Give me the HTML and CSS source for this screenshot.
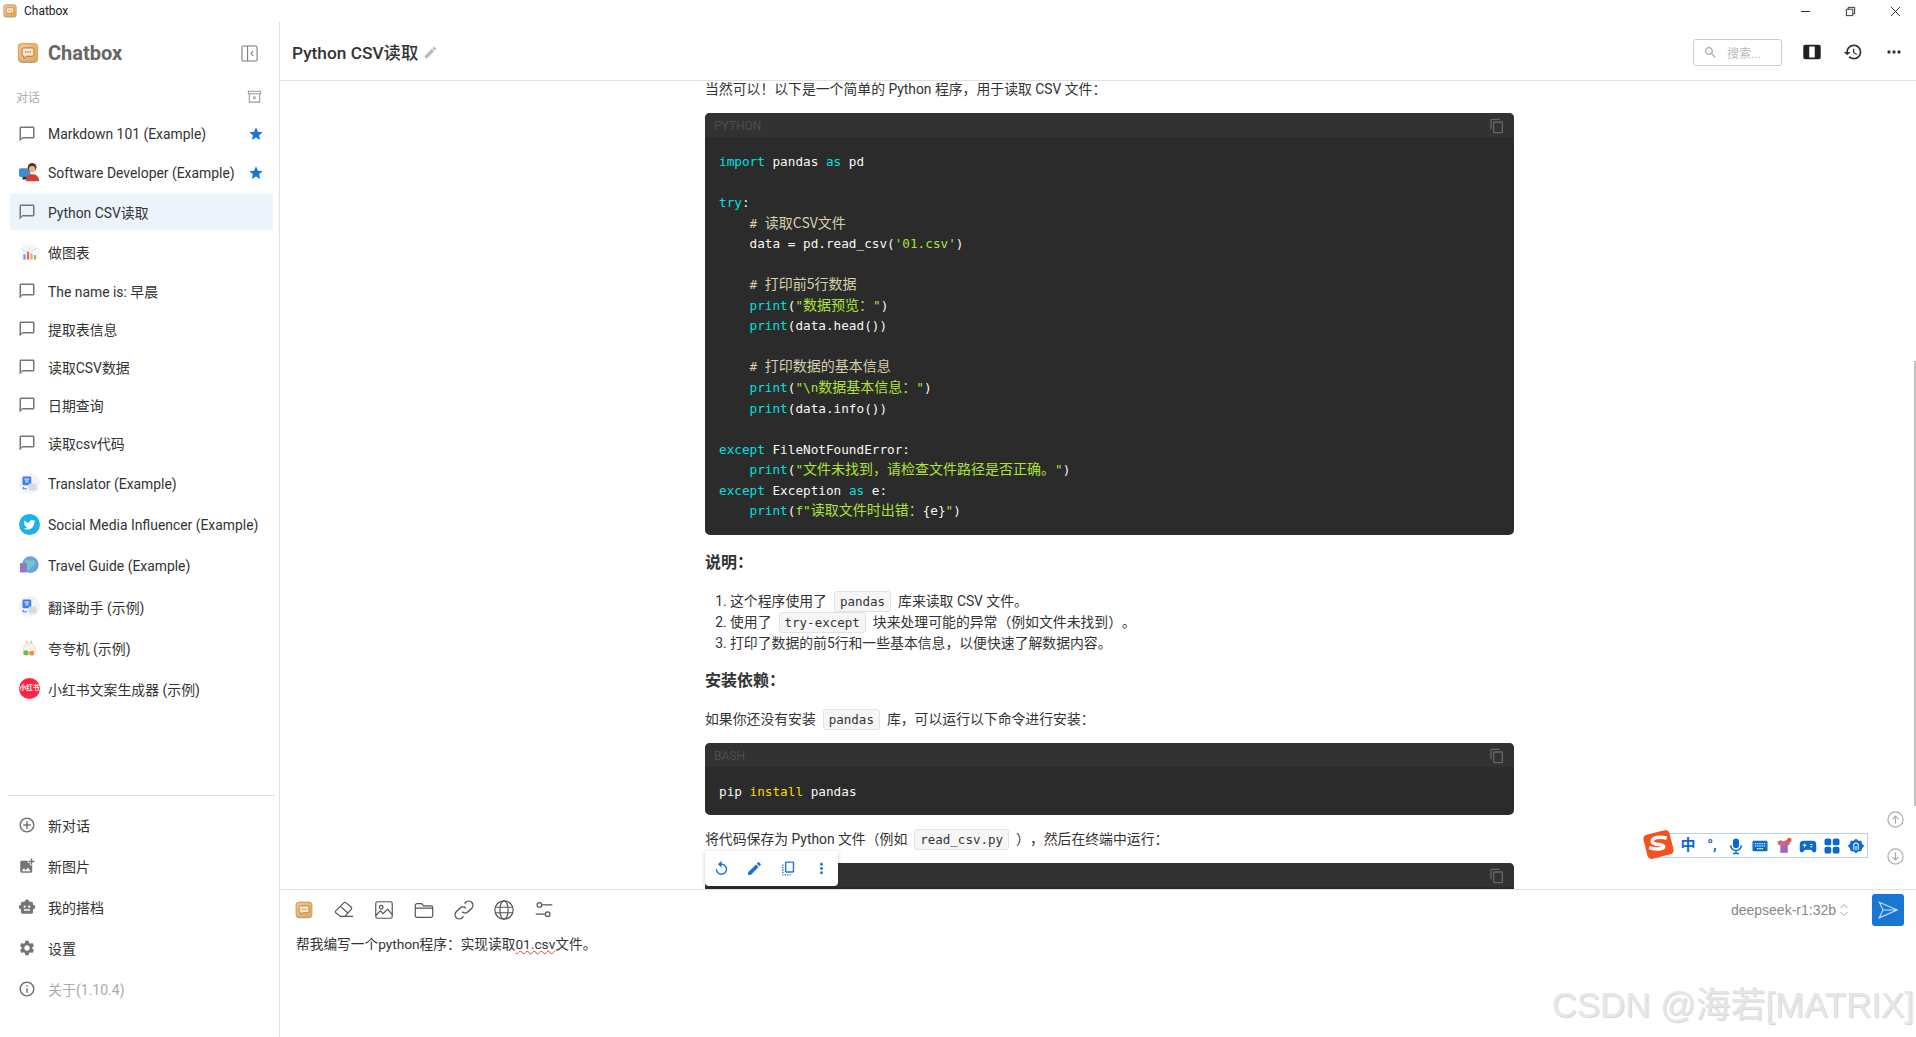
FILE: index.html
```html
<!DOCTYPE html>
<html lang="zh">
<head>
    <meta charset="UTF-8">
    <title>Chatbox</title>
    <link rel="stylesheet" href="styles.css">
</head>
<body>
    <svg class="sprite" aria-hidden="true">
        <defs>
            <linearGradient id="logoGrad" x1="0" y1="0" x2="1" y2="1">
                <stop offset="0" stop-color="#f5c98a"/>
                <stop offset="1" stop-color="#f0a04e"/>
            </linearGradient>
        </defs>
        <symbol id="i-logo" viewBox="0 0 24 24">
            <rect x="1" y="1" width="22" height="22" rx="5" fill="#6fb38f"/>
            <rect x="1" y="1" width="22" height="21" rx="5" fill="#e0a468"/>
            <rect x="2.500" y="2.500" width="19" height="18" rx="4" fill="url(#logoGrad)"/>
            <path d="M7.500 6.500h9a2 2 0 0 1 2 2v5a2 2 0 0 1-2 2h-6l-3 2.500v-2.500a2 2 0 0 1-2-2v-5a2 2 0 0 1 2-2z" fill="#fbe6cb" stroke="#8a6a4a" stroke-width=".9"/>
            <circle cx="9.500" cy="11" r=".8" fill="#8a6a4a"/><circle cx="12" cy="11" r=".8" fill="#8a6a4a"/><circle cx="14.500" cy="11" r=".8" fill="#8a6a4a"/>
        </symbol>
        <symbol id="i-chat" viewBox="0 0 24 24"><path d="M20 2H4c-1.100 0-2 .9-2 2v18l4-4h14c1.100 0 2-.9 2-2V4c0-1.100-.9-2-2-2zm0 14H6l-2 2V4h16v12z"/></symbol>
        <symbol id="i-star" viewBox="0 0 24 24"><path d="M12 17.270 18.180 21l-1.640-6.970L22 9.240l-7.190-.61L12 2 9.190 8.630 2 9.240l5.460 4.730L5.820 21z"/></symbol>
        <symbol id="i-add" viewBox="0 0 24 24"><path d="M13 7h-2v4H7v2h4v4h2v-4h4v-2h-4V7zm-1-5C6.480 2 2 6.480 2 12s4.480 10 10 10 10-4.480 10-10S17.520 2 12 2zm0 18c-4.410 0-8-3.590-8-8s3.590-8 8-8 8 3.590 8 8-3.590 8-8 8z"/></symbol>
        <symbol id="i-photo" viewBox="0 0 24 24"><path d="M19 7v2.990s-1.990.01-2 0V7h-3s.01-1.990 0-2h3V2h2v3h3v2h-3zm-3 4V8h-3V5H5c-1.100 0-2 .9-2 2v12c0 1.100.9 2 2 2h12c1.100 0 2-.9 2-2v-8h-3zM5 19l3-4 2 3 3-4 4 5H5z"/></symbol>
        <symbol id="i-bot" viewBox="0 0 24 24"><path d="M20 9V7c0-1.100-.9-2-2-2h-3c0-1.660-1.340-3-3-3S9 3.340 9 5H6c-1.100 0-2 .9-2 2v2c-1.660 0-3 1.340-3 3s1.340 3 3 3v4c0 1.100.9 2 2 2h12c1.100 0 2-.9 2-2v-4c1.660 0 3-1.340 3-3s-1.340-3-3-3zM7.500 11.500c0-.83.67-1.500 1.500-1.500s1.500.67 1.500 1.500S9.830 13 9 13s-1.500-.67-1.500-1.500zM16 17H8v-2h8v2zm-1-4c-.83 0-1.500-.67-1.500-1.500S14.170 10 15 10s1.500.67 1.500 1.500S15.830 13 15 13z"/></symbol>
        <symbol id="i-gear" viewBox="0 0 24 24"><path d="M19.140 12.940c.04-.3.06-.61.06-.94 0-.32-.02-.64-.07-.94l2.030-1.580c.18-.14.23-.41.12-.61l-1.920-3.320c-.12-.22-.37-.29-.59-.22l-2.390.96c-.5-.38-1.030-.7-1.620-.94l-.36-2.540c-.04-.24-.24-.41-.48-.41h-3.840c-.24 0-.43.17-.47.41l-.36 2.540c-.59.24-1.130.57-1.620.94l-2.390-.96c-.22-.08-.47 0-.59.22L2.740 8.870c-.12.21-.08.47.12.61l2.030 1.580c-.05.3-.09.63-.09.94s.02.64.07.94l-2.030 1.580c-.18.14-.23.41-.12.61l1.920 3.320c.12.22.37.29.59.22l2.390-.96c.5.38 1.030.7 1.620.94l.36 2.540c.05.24.24.41.48.41h3.840c.24 0 .44-.17.47-.41l.36-2.540c.59-.24 1.130-.56 1.620-.94l2.390.96c.22.08.47 0 .59-.22l1.920-3.320c.12-.22.07-.47-.12-.61l-2.010-1.580zM12 15.600c-1.980 0-3.600-1.620-3.600-3.600s1.620-3.600 3.600-3.600 3.600 1.620 3.600 3.600-1.620 3.600-3.600 3.600z"/></symbol>
        <symbol id="i-info" viewBox="0 0 24 24"><path d="M11 7h2v2h-2zm0 4h2v6h-2zm1-9C6.480 2 2 6.480 2 12s4.480 10 10 10 10-4.480 10-10S17.520 2 12 2zm0 18c-4.410 0-8-3.590-8-8s3.590-8 8-8 8 3.590 8 8-3.590 8-8 8z"/></symbol>
        <symbol id="i-edit" viewBox="0 0 24 24"><path d="M3 17.250V21h3.750L17.810 9.940l-3.750-3.750L3 17.250zM20.710 7.040c.39-.39.39-1.020 0-1.410l-2.340-2.340a.996.996 0 0 0-1.410 0l-1.830 1.830 3.750 3.750 1.830-1.830z"/></symbol>
        <symbol id="i-replay" viewBox="0 0 24 24"><path d="M12 5V1L7 6l5 5V7c3.310 0 6 2.690 6 6s-2.690 6-6 6-6-2.690-6-6H4c0 4.420 3.580 8 8 8s8-3.580 8-8-3.580-8-8-8z"/></symbol>
        <symbol id="i-copyall" viewBox="0 0 24 24"><path d="M18 2H9c-1.100 0-2 .9-2 2v12c0 1.100.9 2 2 2h9c1.100 0 2-.9 2-2V4c0-1.100-.9-2-2-2zm0 14H9V4h9v12zM3 15v-2h2v2H3zm0-5.500h2v2H3v-2zM10 20h2v2h-2v-2zm-7-1.500v-2h2v2H3zM5 22c-1.100 0-2-.9-2-2h2v2zm3.500 0h-2v-2h2v2zm5 0v-2h2c0 1.100-.9 2-2 2zM5 6v2H3c0-1.100.9-2 2-2z"/></symbol>
        <symbol id="i-vert" viewBox="0 0 24 24"><circle cx="12" cy="6" r="2"/><circle cx="12" cy="12" r="2"/><circle cx="12" cy="18" r="2"/></symbol>
        <symbol id="i-horiz" viewBox="0 0 24 24"><circle cx="6" cy="12" r="2"/><circle cx="12" cy="12" r="2"/><circle cx="18" cy="12" r="2"/></symbol>
        <symbol id="i-history" viewBox="0 0 24 24"><path d="M13 3c-4.970 0-9 4.030-9 9H1l3.890 3.890.07.14L9 12H6c0-3.870 3.130-7 7-7s7 3.130 7 7-3.130 7-7 7c-1.930 0-3.680-.79-4.940-2.060l-1.420 1.420C8.270 19.990 10.510 21 13 21c4.970 0 9-4.030 9-9s-4.030-9-9-9zm-1 5v5l4.280 2.540.72-1.210-3.500-2.080V8H12z"/></symbol>
        <symbol id="i-search" viewBox="0 0 24 24"><path d="M15.500 14h-.79l-.28-.27C15.410 12.590 16 11.110 16 9.500 16 5.910 13.090 3 9.500 3S3 5.910 3 9.500 5.910 16 9.500 16c1.610 0 3.090-.59 4.230-1.570l.27.28v.79l5 4.990L20.490 19l-4.990-5zm-6 0C7.010 14 5 11.990 5 9.500S7.010 5 9.500 5 14 7.010 14 9.500 11.990 14 9.500 14z"/></symbol>
        <symbol id="i-copy" viewBox="0 0 24 24"><path d="M16 1H4c-1.100 0-2 .9-2 2v14h2V3h12V1zm3 4H8c-1.100 0-2 .9-2 2v14c0 1.100.9 2 2 2h11c1.100 0 2-.9 2-2V7c0-1.100-.9-2-2-2zm0 16H8V7h11v14z"/></symbol>
        <symbol id="i-translate" viewBox="0 0 24 24">
            <circle cx="12" cy="12" r="12" fill="#f2f3f5"/>
            <rect x="4" y="4" width="10" height="10" rx="1.500" fill="#3f7fe8"/>
            <rect x="11" y="12" width="9" height="8" rx="1.500" fill="#d5dbe6"/>
            <path d="M6 7h6M9 6v1M7 11l4-3M7 8l4 3" stroke="#fff" stroke-width=".9" fill="none"/>
            <path d="M5 16v2h4" stroke="#3f7fe8" stroke-width="1.300" fill="none"/>
        </symbol>
        <symbol id="i-twitter" viewBox="0 0 24 24">
            <circle cx="12" cy="12" r="12" fill="#1fb1ea"/>
            <path transform="translate(4.200 4.200) scale(.65)" fill="#fff" d="M22.460 6c-.77.35-1.600.58-2.460.69.88-.53 1.560-1.370 1.880-2.380-.83.5-1.750.85-2.720 1.070C18.370 4.500 17.260 4 16 4c-2.350 0-4.270 1.920-4.270 4.290 0 .34.04.67.11.98C8.280 9.090 5.110 7.380 3 4.790c-.37.63-.58 1.370-.58 2.150 0 1.490.75 2.810 1.910 3.560-.71 0-1.370-.2-1.950-.5v.03c0 2.080 1.480 3.820 3.440 4.210a4.220 4.220 0 0 1-1.930.07 4.280 4.280 0 0 0 4 2.980 8.521 8.521 0 0 1-5.330 1.840c-.34 0-.68-.02-1.020-.06C3.440 20.290 5.700 21 8.120 21 16 21 20.310 14.460 20.310 8.790c0-.19 0-.37-.01-.56.84-.6 1.560-1.360 2.140-2.230z"/>
        </symbol>
    </svg>

    <div class="titlebar">
        <svg class="title-logo"><use href="#i-logo"/></svg>
        <span class="title-name">Chatbox</span>
        <div class="win-controls">
            <svg viewBox="0 0 12 12"><path d="M1 6h10" stroke="#222" fill="none"/></svg>
            <svg viewBox="0 0 12 12"><path d="M1.500 3.500h7v7h-7zM3.500 3.500v-2h7v7h-2" stroke="#222" fill="none"/></svg>
            <svg viewBox="0 0 12 12"><path d="M1 1l10 10M11 1L1 11" stroke="#222" fill="none"/></svg>
        </div>
    </div>

    <div class="app">
        <aside class="sidebar">
            <div class="brand">
                <svg class="brand-logo"><use href="#i-logo"/></svg>
                <span class="brand-name">Chatbox</span>
                <svg class="collapse" viewBox="0 0 18 18" fill="none" stroke="#777" stroke-width="1.100">
                    <rect x="1" y="1" width="16" height="16" rx="1.500"/>
                    <path d="M7 1v16M13 6.500L10.500 9l2.500 2.500"/>
                </svg>
            </div>
            <div class="section-label">
                <span>对话</span>
                <svg class="archive" viewBox="0 0 16 16" fill="none" stroke="#999" stroke-width="1.100">
                    <path d="M1.500 2.500h13v2.500h-13zM2.500 5v9h11V5M6.700 8l2.600 2.600M9.300 8l-2.600 2.600"/>
                </svg>
            </div>
            <nav class="chat-list">
                <a class="row"><svg class="row-icon"><use href="#i-chat"/></svg><span class="row-text">Markdown 101 (Example)</span><svg class="row-star"><use href="#i-star"/></svg></a>
                <a class="row row-mid">
                    <svg class="row-avatar" viewBox="0 0 24 24">
                        <rect x="0" y="7" width="13" height="10" rx="2" fill="#3f8fc4"/>
                        <rect x="4" y="17" width="5" height="3" fill="#333"/>
                        <circle cx="15" cy="6" r="5" fill="#5a3422"/>
                        <circle cx="15" cy="8" r="3.500" fill="#e9b48c"/>
                        <path d="M8 22c0-6 3-8 7-8s8 2 8 8z" fill="#d8402d"/>
                    </svg>
                    <span class="row-text">Software Developer (Example)</span><svg class="row-star"><use href="#i-star"/></svg>
                </a>
                <a class="row row-tall row-active"><svg class="row-icon"><use href="#i-chat"/></svg><span class="row-text">Python CSV读取</span></a>
                <a class="row row-tall">
                    <svg class="row-avatar" viewBox="0 0 24 24">
                        <circle cx="12" cy="12" r="11" fill="#f7f6f8"/>
                        <path d="M3 8l4 3 4-4 4 3 6-3" stroke="#b9b4c8" fill="none" stroke-dasharray="1 1"/>
                        <rect x="5" y="14" width="2.500" height="6" fill="#5aa5e6"/>
                        <rect x="9" y="11" width="2.500" height="9" fill="#e8607a"/>
                        <rect x="13" y="13" width="2.500" height="7" fill="#f0b040"/>
                        <rect x="17" y="15" width="2.500" height="5" fill="#7ac070"/>
                    </svg>
                    <span class="row-text">做图表</span>
                </a>
                <a class="row"><svg class="row-icon"><use href="#i-chat"/></svg><span class="row-text">The name is: 早晨</span></a>
                <a class="row"><svg class="row-icon"><use href="#i-chat"/></svg><span class="row-text">提取表信息</span></a>
                <a class="row"><svg class="row-icon"><use href="#i-chat"/></svg><span class="row-text">读取CSV数据</span></a>
                <a class="row"><svg class="row-icon"><use href="#i-chat"/></svg><span class="row-text">日期查询</span></a>
                <a class="row"><svg class="row-icon"><use href="#i-chat"/></svg><span class="row-text">读取csv代码</span></a>
                <a class="row row-persona row-first"><svg class="row-avatar"><use href="#i-translate"/></svg><span class="row-text">Translator (Example)</span></a>
                <a class="row row-persona"><svg class="row-avatar"><use href="#i-twitter"/></svg><span class="row-text">Social Media Influencer (Example)</span></a>
                <a class="row row-persona">
                    <svg class="row-avatar" viewBox="0 0 24 24">
                        <circle cx="13" cy="11" r="9.500" fill="#6f9fe0"/>
                        <path d="M8 5c3 0 4 2 7 1s4 3 3 5-4 1-5 4-3 3-4 1 1-4-1-6 0-5 0-5z" fill="#6fc8c8"/>
                        <rect x="1" y="9" width="8" height="11" rx="1.500" fill="#8e7cc0"/>
                    </svg>
                    <span class="row-text">Travel Guide (Example)</span>
                </a>
                <a class="row row-persona"><svg class="row-avatar"><use href="#i-translate"/></svg><span class="row-text">翻译助手 (示例)</span></a>
                <a class="row row-persona">
                    <svg class="row-avatar" viewBox="0 0 24 24">
                        <path d="M6 20c-2-6-1-13 6-13s8 7 6 13z" fill="#f7f3ea" stroke="#cfc8b8" stroke-width=".7"/>
                        <path d="M9 7V4M14 7V4" stroke="#9cb88a"/>
                        <circle cx="8" cy="18" r="3" fill="#7cb35a"/>
                        <rect x="12" y="16" width="5" height="5" rx="1" fill="#f0902e"/>
                    </svg>
                    <span class="row-text">夸夸机 (示例)</span>
                </a>
                <a class="row row-persona"><span class="badge-xhs">小红书</span><span class="row-text">小红书文案生成器 (示例)</span></a>
            </nav>
            <div class="side-bottom">
                <a class="row row-menu"><svg class="row-icon"><use href="#i-add"/></svg><span class="row-text">新对话</span></a>
                <a class="row row-menu"><svg class="row-icon"><use href="#i-photo"/></svg><span class="row-text">新图片</span></a>
                <a class="row row-menu"><svg class="row-icon"><use href="#i-bot"/></svg><span class="row-text">我的搭档</span></a>
                <a class="row row-menu"><svg class="row-icon"><use href="#i-gear"/></svg><span class="row-text">设置</span></a>
                <a class="row row-menu row-about"><svg class="row-icon"><use href="#i-info"/></svg><span class="row-text">关于(1.10.4)</span></a>
            </div>
        </aside>

        <main class="main">
            <header class="topbar">
                <span class="chat-title">Python CSV读取</span>
                <svg class="title-edit"><use href="#i-edit"/></svg>
                <div class="search-box">
                    <svg class="search-icon"><use href="#i-search"/></svg>
                    <span>搜索...</span>
                </div>
                <svg class="top-icon top-columns" viewBox="0 0 24 24">
                    <rect x="2.500" y="4" width="19" height="16" rx="2" fill="#222"/>
                    <rect x="9" y="6" width="6" height="12" fill="#fff"/>
                </svg>
                <svg class="top-icon"><use href="#i-history"/></svg>
                <svg class="top-icon"><use href="#i-horiz"/></svg>
            </header>

            <section class="messages">
                <div class="message">
                    <p class="first-line">当然可以！以下是一个简单的 Python 程序，用于读取 CSV 文件：</p>

                    <div class="code-block">
                        <div class="code-head"><span>PYTHON</span><svg><use href="#i-copy"/></svg></div>
<pre><span class="kw">import</span> pandas <span class="kw">as</span> pd

<span class="kw">try</span>:
    <span class="cm"># <span class="cn">读取CSV文件</span></span>
    data = pd.read_csv(<span class="st">'01.csv'</span>)

    <span class="cm"># <span class="cn">打印前5行数据</span></span>
    <span class="kw">print</span>(<span class="st">"<span class="cn">数据预览：</span>"</span>)
    <span class="kw">print</span>(data.head())

    <span class="cm"># <span class="cn">打印数据的基本信息</span></span>
    <span class="kw">print</span>(<span class="st">"\n<span class="cn">数据基本信息：</span>"</span>)
    <span class="kw">print</span>(data.info())

<span class="kw">except</span> FileNotFoundError:
    <span class="kw">print</span>(<span class="st">"<span class="cn">文件未找到，请检查文件路径是否正确。</span>"</span>)
<span class="kw">except</span> Exception <span class="kw">as</span> e:
    <span class="kw">print</span>(<span class="st">f"<span class="cn">读取文件时出错：</span></span>{e}<span class="st">"</span>)</pre>
                    </div>

                    <h3 class="head-notes">说明：</h3>
                    <ol class="notes">
                        <li>这个程序使用了<code>pandas</code>库来读取 CSV 文件。</li>
                        <li>使用了<code>try-except</code>块来处理可能的异常（例如文件未找到）。</li>
                        <li>打印了数据的前5行和一些基本信息，以便快速了解数据内容。</li>
                    </ol>

                    <h3 class="head-install">安装依赖：</h3>
                    <p class="install-line">如果你还没有安装<code>pandas</code>库，可以运行以下命令进行安装：</p>

                    <div class="code-block code-bash">
                        <div class="code-head"><span>BASH</span><svg><use href="#i-copy"/></svg></div>
<pre>pip <span class="bt">install</span> pandas</pre>
                    </div>

                    <p class="save-line">将代码保存为 Python 文件（例如<code>read_csv.py</code>），然后在终端中运行：</p>

                    <div class="code-block code-next">
                        <div class="code-head"><span></span><svg><use href="#i-copy"/></svg></div>
                    </div>
                </div>

                <div class="msg-actions">
                    <svg><use href="#i-replay"/></svg>
                    <svg><use href="#i-edit"/></svg>
                    <svg><use href="#i-copyall"/></svg>
                    <svg><use href="#i-vert"/></svg>
                </div>

                <div class="scroll-thumb"></div>
                <div class="jump-btns">
                    <svg viewBox="0 0 20 20"><circle cx="10" cy="10" r="8" fill="none" stroke="#aaa" stroke-width="1.200"/><path d="M10 14.500V6.500M6.800 9.700L10 6.500l3.200 3.200" fill="none" stroke="#aaa" stroke-width="1.200"/></svg>
                    <svg viewBox="0 0 20 20"><circle cx="10" cy="10" r="8" fill="none" stroke="#aaa" stroke-width="1.200"/><path d="M10 5.500v8M6.800 10.300l3.200 3.200 3.200-3.200" fill="none" stroke="#aaa" stroke-width="1.200"/></svg>
                </div>
            </section>

            <footer class="composer">
                <div class="tools">
                    <svg class="tool tool-logo"><use href="#i-logo"/></svg>
                    <svg class="tool" viewBox="0 0 24 24" fill="none" stroke="#555" stroke-width="1.300">
                        <path d="M3 13l9-9a1.500 1.500 0 0 1 2 0l6 5a1.500 1.500 0 0 1 0 2l-7 8H8l-5-4a1.500 1.500 0 0 1 0-2zM8 8l8 7M8 19h14"/>
                    </svg>
                    <svg class="tool" viewBox="0 0 24 24" fill="none" stroke="#555" stroke-width="1.300">
                        <rect x="3" y="3" width="18" height="18" rx="2"/>
                        <circle cx="9" cy="9" r="2"/>
                        <path d="M3 18l5-5 3 3 5-5 5 6"/>
                    </svg>
                    <svg class="tool" viewBox="0 0 24 24" fill="none" stroke="#555" stroke-width="1.300">
                        <path d="M2.500 7a2 2 0 0 1 2-2h5l2 2.500h8a2 2 0 0 1 2 2V18a2 2 0 0 1-2 2h-15a2 2 0 0 1-2-2zM2.500 10h19"/>
                    </svg>
                    <svg class="tool" viewBox="0 0 24 24" fill="none" stroke="#555" stroke-width="1.500">
                        <path d="M10 14a4.500 4.500 0 0 0 6.500 0l4-4a4.600 4.600 0 0 0-6.500-6.500l-1.500 1.500M14 10a4.500 4.500 0 0 0-6.500 0l-4 4a4.600 4.600 0 0 0 6.500 6.500l1.500-1.500"/>
                    </svg>
                    <svg class="tool" viewBox="0 0 24 24" fill="none" stroke="#555" stroke-width="1.300">
                        <circle cx="12" cy="12" r="10"/>
                        <ellipse cx="12" cy="12" rx="4.500" ry="10"/>
                        <path d="M2.500 9h19M2.500 15h19"/>
                    </svg>
                    <svg class="tool" viewBox="0 0 24 24" fill="none" stroke="#555" stroke-width="1.300">
                        <circle cx="7" cy="6.500" r="2.500"/><circle cx="16" cy="16.500" r="2.500"/>
                        <path d="M10 6.500h11M3 16.500h10"/>
                    </svg>
                    <div class="model">
                        <span>deepseek-r1:32b</span>
                        <svg viewBox="0 0 10 16" fill="none" stroke="#aaa" stroke-width="1"><path d="M1.500 6L5 2.500 8.500 6M1.500 10L5 13.500 8.500 10"/></svg>
                    </div>
                    <button class="send">
                        <svg viewBox="0 0 24 24" fill="none" stroke="#cfe2f7" stroke-width="1.200"><path d="M2.500 3.500L22 12 2.500 20.500 6.500 12zM6.500 12H22"/></svg>
                    </button>
                </div>
                <p class="prompt">帮我编写一个python程序：实现读取<span class="spell">01.csv</span>文件。</p>
            </footer>
        </main>
    </div>

    <div class="ime-bar">
        <svg class="ime-logo" viewBox="0 0 32 30">
            <rect x="3" y="3" width="26" height="24" rx="4" fill="#f4511e" transform="rotate(-14 16 15)"/>
            <path d="M24 9c-6-2-14-1-14 3s11 2 11 5-8 3-14 1" fill="none" stroke="#fff" stroke-width="3.500"/>
        </svg>
        <span class="ime-zh">中</span>
        <span class="ime-punct">°,</span>
        <svg viewBox="0 0 24 24" fill="#0a6ad0"><rect x="8" y="2" width="8" height="13" rx="4"/><path d="M5 11a7 7 0 0 0 14 0M12 18v3M8 22h8" fill="none" stroke="#0a6ad0" stroke-width="2"/></svg>
        <svg viewBox="0 0 24 24"><rect x="2" y="5" width="20" height="14" rx="1.500" fill="#0a6ad0"/><path d="M5 9h14M5 12h14M8 15.500h8" stroke="#fff" stroke-width="1.400" stroke-dasharray="2 1"/></svg>
        <svg viewBox="0 0 24 24">
            <defs><linearGradient id="shirt" x1="0" y1="0" x2="1" y2="1"><stop offset="0" stop-color="#f0684e"/><stop offset="1" stop-color="#7a62f0"/></linearGradient></defs>
            <path d="M3 6l5-2c1 2 5 2 7 0l5 2-1 5-2-.5V21H7V10.500L5 11z" fill="url(#shirt)"/>
            <circle cx="19" cy="4" r="3" fill="#f4511e"/>
        </svg>
        <svg viewBox="0 0 24 24" fill="#0a6ad0"><path d="M6 5h12a5 5 0 0 1 5 5v8a2.500 2.500 0 0 1-4.500 1.500L16 17H8l-2.500 2.500A2.500 2.500 0 0 1 1 18v-8a5 5 0 0 1 5-5z"/><path d="M5 11h5M7.500 8.500v5M15 10h3M15 13h3" stroke="#fff" stroke-width="1.400"/></svg>
        <svg viewBox="0 0 24 24" fill="#0a6ad0"><rect x="2" y="2" width="9" height="9" rx="2.500"/><rect x="13" y="2" width="9" height="9" rx="2.500"/><rect x="2" y="13" width="9" height="9" rx="2.500"/><rect x="13" y="13" width="9" height="9" rx="2.500"/></svg>
        <svg viewBox="0 0 24 24" fill="#0a6ad0"><path d="M12 2l3 3h4l1 4 3 3-3 3-1 4h-4l-3 3-3-3H5l-1-4-3-3 3-3 1-4h4z"/><path d="M9 17v-6a3 3 0 0 1 6 0v6M12 12v6" fill="none" stroke="#fff" stroke-width="1.400"/></svg>
    </div>

    <div class="watermark">CSDN @海若[MATRIX]</div>
</body>
</html>
```

FILE: styles.css
```css
* {
    box-sizing: border-box;
}
html, body {
    height: 100%;
    margin: 0;
    overflow: hidden;
}
body {
    display: flex;
    flex-direction: column;
    background: #fff;
    color: #333;
    font-family: Roboto, "Noto Sans CJK SC", sans-serif;
    font-size: 14px;
    text-spacing-trim: space-all;
    position: relative;
}
.sprite {
    position: absolute;
    width: 0;
    height: 0;
}

/* window title */
.titlebar {
    height: 22px;
    flex: none;
    display: flex;
    align-items: center;
    padding-left: 3px;
}
.title-logo {
    width: 14px;
    height: 14px;
}
.title-name {
    margin-left: 7px;
    font-size: 12px;
    color: #222;
}
.win-controls {
    margin-left: auto;
    display: flex;
    gap: 34px;
    padding-right: 15px;
}
.win-controls svg {
    width: 11px;
    height: 11px;
}

.app {
    flex: 1;
    display: flex;
    min-height: 0;
}

/* sidebar */
.sidebar {
    width: 280px;
    flex: none;
    display: flex;
    flex-direction: column;
    border-right: 1px solid #e0e0e0;
}
.brand {
    height: 58px;
    padding: 4px 21px 0 17px;
    display: flex;
    align-items: center;
}
.brand-logo {
    width: 22px;
    height: 22px;
}
.brand-name {
    margin-left: 9px;
    font-size: 20px;
    font-weight: 700;
    color: #666;
}
.collapse {
    width: 17px;
    height: 17px;
    margin-left: auto;
}
.section-label {
    height: 35px;
    padding: 0 17px 2px 16px;
    display: flex;
    align-items: center;
    justify-content: space-between;
    font-size: 12px;
    color: #aaa;
}
.archive {
    width: 15px;
    height: 15px;
}
.chat-list {
    flex: 1;
}
.row {
    height: 38px;
    padding: 0 15px 0 18px;
    display: flex;
    align-items: center;
    font-size: 13.9px;
    color: #333;
}
.row-mid {
    height: 39px;
}
.row-tall {
    height: 40px;
}
.row-persona {
    height: 41px;
}
.row-first {
    margin-top: 1px;
}
.row-active {
    position: relative;
    z-index: 0;
}
.row-active::before {
    content: "";
    position: absolute;
    left: 10px;
    right: 6px;
    top: 2px;
    bottom: 2px;
    background: #edf3fb;
    z-index: -1;
}
.row-icon {
    width: 18px;
    height: 18px;
    fill: #757575;
    flex: none;
}
.row-avatar {
    width: 21px;
    height: 21px;
    margin-left: 1px;
    margin-right: -4px;
    flex: none;
}
.row-text {
    margin-left: 12px;
    white-space: nowrap;
}
.row-star {
    width: 16px;
    height: 16px;
    margin-left: auto;
    fill: #1976d2;
    flex: none;
}
.badge-xhs {
    width: 21px;
    height: 21px;
    margin: 0 -4px 0 1px;
    flex: none;
    border-radius: 50%;
    background: #ff2442;
    color: #fff;
    font-size: 6.5px;
    font-weight: 700;
    line-height: 21px;
    text-align: center;
    white-space: nowrap;
}
.side-bottom {
    margin: 0 4px 27px 8px;
    padding-top: 9px;
    border-top: 1px solid #e0e0e0;
}
.row-menu {
    height: 41.1px;
    padding-left: 10px;
    font-size: 14px;
}
.row-about {
    color: #aaa;
}

/* main column */
.main {
    flex: 1;
    min-width: 0;
    display: flex;
    flex-direction: column;
}
.topbar {
    height: 59px;
    flex: none;
    padding: 2px 12px 0 12px;
    display: flex;
    align-items: center;
    border-bottom: 1px solid #e0e0e0;
}
.chat-title {
    margin-top: -2px;
    font-size: 17.3px;
    font-weight: 500;
    color: #333;
}
.title-edit {
    width: 15px;
    height: 15px;
    margin-left: 5px;
    fill: #bbb;
}
.search-box {
    width: 89px;
    height: 27px;
    margin-left: auto;
    padding-left: 9px;
    display: flex;
    align-items: center;
    gap: 9px;
    border: 1px solid #ccc;
    border-radius: 3px;
    font-size: 12px;
    color: #bbb;
}
.search-icon {
    width: 15px;
    height: 15px;
    fill: #aaa;
}
.top-icon {
    width: 20px;
    height: 20px;
    margin-left: 21px;
    fill: #333;
}
.search-box + .top-icon {
    margin-left: 20px;
}
.top-icon.top-columns {
    width: 22px;
    height: 22px;
    margin-left: 19px;
    margin-right: -1px;
}

/* conversation */
.messages {
    flex: 1;
    min-height: 0;
    overflow: hidden;
    position: relative;
}
.message {
    width: 809px;
    margin-left: 425px;
    margin-top: -2px;
    font-size: 13.85px;
    line-height: 20.3px;
}
.message p {
    margin: 0;
}
.code-block {
    background: #2b2b2b;
    border-radius: 5px;
    overflow: hidden;
    margin-top: 14px;
}
.code-head {
    height: 24px;
    padding: 2px 9px 0;
    display: flex;
    align-items: center;
    justify-content: space-between;
    background: #323232;
    font-size: 12px;
    color: #4e4e4e;
}
.code-head svg {
    width: 16px;
    height: 16px;
    fill: #666;
}
pre {
    margin: 0;
    padding: 14.7px 14px 13px;
    font-family: "DejaVu Sans Mono", "Noto Sans CJK SC", monospace;
    font-size: 12.7px;
    line-height: 20.55px;
    color: #f8f8f2;
}
.cn {
    font-family: "Noto Sans CJK SC", sans-serif;
    font-size: 14px;
    line-height: 0;
}
.kw {
    color: #00e0e0;
}
.cm {
    color: #d4d0ab;
}
.st {
    color: #abe338;
}
.bt {
    color: #ffd700;
}
h3 {
    margin: 0;
    font-size: 16px;
    font-weight: 700;
    line-height: 22px;
    color: #333;
}
.head-notes {
    margin-top: 17px;
}
.notes {
    margin: 17px 0 0;
    padding-left: 25px;
}
.head-install {
    margin-top: 17px;
}
.install-line {
    margin-top: 17px !important;
}
.code-bash {
    margin-top: 13px;
}
.code-bash pre {
    padding-bottom: 13px;
}
.save-line {
    margin-top: 14px !important;
}
.code-next {
    margin-top: 13px;
    height: 60px;
}
code {
    display: inline-block;
    margin: 0 7px;
    padding: 0 5px;
    height: 21px;
    line-height: 20px;
    background: #f6f6f6;
    border: 1px solid #e2e2e2;
    border-radius: 3px;
    font-family: "DejaVu Sans Mono", monospace;
    font-size: 12.5px;
    color: #333;
    vertical-align: baseline;
}

/* hovering message actions */
.msg-actions {
    position: absolute;
    left: 425px;
    bottom: 3px;
    width: 133px;
    height: 35px;
    padding: 0 8px;
    display: flex;
    align-items: center;
    justify-content: space-between;
    background: #fff;
    border-radius: 0 0 4px 4px;
    box-shadow: 0 1px 4px rgba(0, 0, 0, .22);
}
.msg-actions svg {
    width: 17px;
    height: 17px;
    fill: #1976d2;
}
.scroll-thumb {
    position: absolute;
    right: 0;
    top: 280px;
    width: 2px;
    height: 445px;
    background: #c4c4c4;
}
.jump-btns {
    position: absolute;
    right: 11px;
    bottom: 23px;
    display: flex;
    flex-direction: column;
    gap: 18px;
}
.jump-btns svg {
    width: 19px;
    height: 19px;
    display: block;
}

/* input area */
.composer {
    height: 148px;
    flex: none;
    border-top: 1px solid #e0e0e0;
}
.tools {
    height: 38px;
    margin-top: 1px;
    padding: 0 12px 0 15px;
    display: flex;
    align-items: center;
    gap: 18px;
}
.tool {
    width: 22px;
    height: 22px;
}
.tool-logo {
    width: 18px;
    height: 18px;
    margin-right: 2px;
}
.model {
    margin-left: auto;
    display: flex;
    align-items: center;
    gap: 3px;
    color: #888;
    font-family: "Liberation Sans", sans-serif;
    font-size: 14px;
}
.model svg {
    width: 10px;
    height: 16px;
}
.model + .send {
    margin-left: 5px;
}
.send {
    width: 32px;
    height: 32px;
    padding: 5px;
    background: #1976d2;
    border: 0;
    border-radius: 3px;
}
.send svg {
    display: block;
    width: 22px;
    height: 22px;
}
.prompt {
    margin: 4px 0 0 16px;
    font-size: 13.7px;
    color: #333;
}
.spell {
    text-decoration: underline wavy #e53935 1px;
}

/* floating things from other apps */
.ime-bar {
    position: absolute;
    left: 1655px;
    top: 833px;
    width: 213px;
    height: 25px;
    padding: 0 0 0 20px;
    display: flex;
    align-items: center;
    background: #fff;
    border: 1px solid #b8cfe8;
}
.ime-bar svg {
    width: 18px;
    height: 18px;
    margin: 0 3px;
    flex: none;
}
.ime-bar .ime-logo {
    position: absolute;
    left: -14px;
    top: -5px;
    width: 33px;
    height: 31px;
    margin: 0;
}
.ime-zh, .ime-punct {
    width: 24px;
    flex: none;
    text-align: center;
    font-size: 15px;
    font-weight: 700;
    color: #0a6ad0;
    line-height: 1;
}
.watermark {
    position: absolute;
    right: 2px;
    bottom: 11px;
    font-family: "Liberation Sans", "Noto Sans CJK SC", sans-serif;
    font-size: 34.9px;
    line-height: 42px;
    color: #e6e6e6;
    text-shadow: 1px 1px 1px #d4d4d4;
    white-space: nowrap;
}
```
